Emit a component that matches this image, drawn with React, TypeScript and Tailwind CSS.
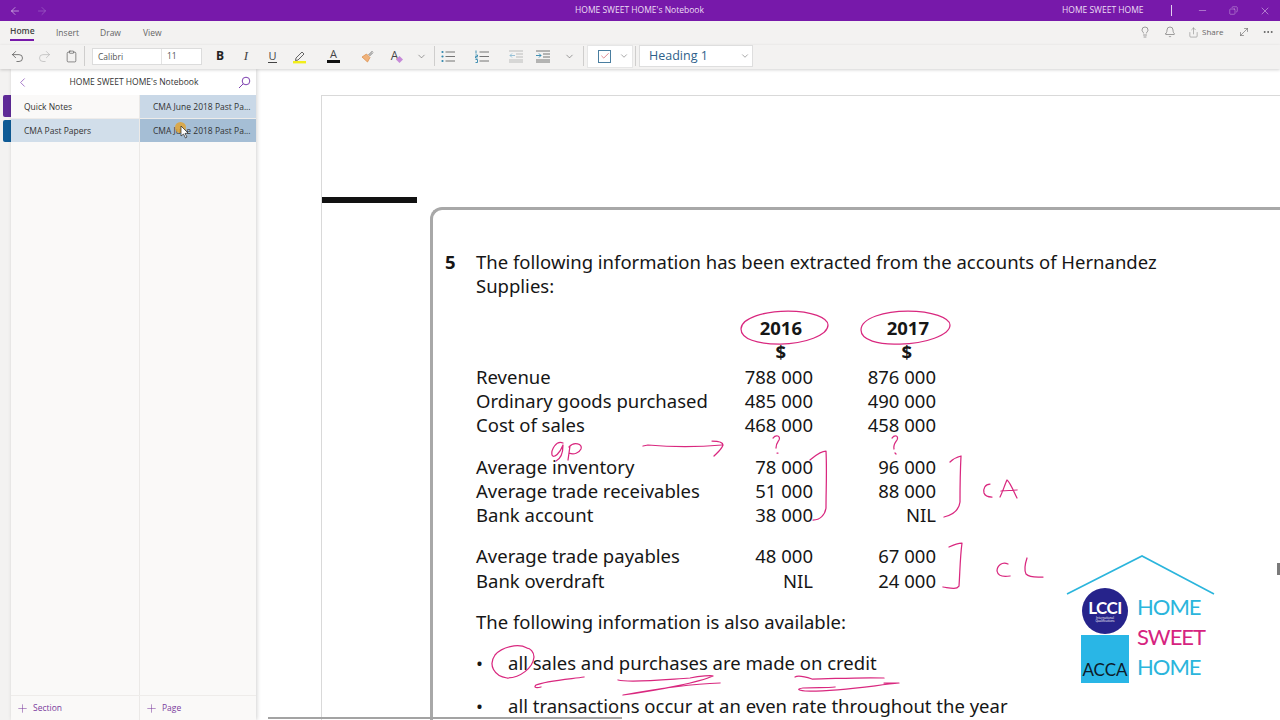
import React from 'react';
import {
  ArrowLeft, ArrowRight, Minus, X, Undo2, Redo2, Clipboard, ChevronDown, ChevronLeft,
  Lightbulb, Bell, Share, MoveDiagonal, Ellipsis, Plus, Check, Copy,
} from 'lucide-react';

const uiFont = "font-['Open_Sans','Noto_Sans',sans-serif]";

function Cell({ w, ml = '', children }: { w: string; ml?: string; children: React.ReactNode }) {
  return <div className={`flex h-full items-center justify-center ${w} ${ml}`}>{children}</div>;
}

function Sep({ ml }: { ml: string }) {
  return <div className={`h-[20px] w-px bg-[#cfcecd] ${ml}`} />;
}

// list style icons from the ribbon, dots/arrows in blue and lines in grey
function ListGlyph({ kind }: { kind: 'bullet' | 'number' | 'outdent' | 'indent' }) {
  const line = kind === 'outdent' ? '#b5b5b5' : '#666';
  return (
    <svg width="14" height="13" viewBox="0 0 14 13" fill="none" strokeWidth="0.9">
      {kind === 'bullet' && (
        <g fill="#2f86ad" stroke="none">
          <circle cx="1.5" cy="2" r="1.1" /><circle cx="1.5" cy="6.5" r="1.1" /><circle cx="1.5" cy="11" r="1.1" />
        </g>
      )}
      {kind === 'number' && (
        <g stroke="#2f86ad">
          <path d="M1 0.5 V3.5 M0.5 5 H2.5 V6.5 H0.5 V8 H2.5 M0.5 9.5 H2.5 V12.5 H0.5" />
        </g>
      )}
      {(kind === 'bullet' || kind === 'number') && (
        <path d="M4.5 2 H14 M4.5 6.5 H14 M4.5 11 H14" stroke={line} />
      )}
      {kind === 'outdent' && (
        <>
          <path d="M0 1 H14 M7 4 H14 M7 7 H14 M0 10 H14 M0 12 H14" stroke={line} />
          <path d="M6 5.5 H1 M3 3.5 L1 5.5 L3 7.5" stroke="#8fbcd4" />
        </>
      )}
      {kind === 'indent' && (
        <>
          <path d="M0 1 H14 M7 4 H14 M7 7 H14 M0 10 H14 M0 12 H14" stroke={line} />
          <path d="M0 5.5 H5 M3 3.5 L5 5.5 L3 7.5" stroke="#2f86ad" />
        </>
      )}
    </svg>
  );
}

const rows: [string, string, string][] = [
  ['Revenue', '788 000', '876 000'],
  ['Ordinary goods purchased', '485 000', '490 000'],
  ['Cost of sales', '468 000', '458 000'],
];
const assets: [string, string, string][] = [
  ['Average inventory', '78 000', '96 000'],
  ['Average trade receivables', '51 000', '88 000'],
  ['Bank account', '38 000', 'NIL'],
];
const liabilities: [string, string, string][] = [
  ['Average trade payables', '48 000', '67 000'],
  ['Bank overdraft', 'NIL', '24 000'],
];

function FigureRows({ data, className = '' }: { data: [string, string, string][]; className?: string }) {
  return (
    <div className={className}>
      {data.map(r => (
        <div key={r[0]} className="grid h-[24.3px] grid-cols-[337px_123px] items-center">
          <div className="flex justify-between">
            <span>{r[0]}</span>
            <span>{r[1]}</span>
          </div>
          <div className="text-right">{r[2]}</div>
        </div>
      ))}
    </div>
  );
}

function Logo() {
  return (
    <div className="absolute left-[1066px] top-[555px] h-[130px] w-[150px]">
      <svg width="150" height="40" viewBox="0 0 150 40" className="block">
        <path d="M1 39 L76 1 L148 39" fill="none" stroke="#2bb5dc" strokeWidth="1.6" />
      </svg>
      <div className="ml-[15px] mt-[-7px] flex gap-[8px]">
        <div className="flex w-[48px] flex-col items-center">
          <div className="flex h-[46px] w-[46px] flex-col items-center justify-center rounded-full bg-[#26238b] text-white">
            <span className="text-[17px] font-bold leading-[15px] tracking-[-0.5px] font-['Lato',sans-serif]">LCCI</span>
            <span className="mt-[2px] text-[3px] leading-[3px]">International</span>
            <span className="text-[3px] leading-[3px]">Qualifications</span>
          </div>
          <div className="mt-[1px] flex h-[48px] w-[48px] items-end justify-center bg-[#29b6e6] pb-[4px] text-[17px] leading-[18px] text-[#0d1b2a] font-['Lato',sans-serif]">ACCA</div>
        </div>
        <div className="flex flex-col pt-[4px] text-[22px] leading-[30px] tracking-[-1px] font-['Lato',sans-serif] text-[#2bb5dc]">
          <span>HOME</span>
          <span className="text-[#d6237f]">SWEET</span>
          <span>HOME</span>
        </div>
      </div>
    </div>
  );
}

function Ink() {
  return (
    <svg width="1280" height="720" viewBox="0 0 1280 720" fill="none" stroke="#d9287f" strokeWidth="1.25" strokeLinecap="round" strokeLinejoin="round" className="pointer-events-none absolute left-0 top-0">
      <path d="M741 329 C741 318 765 311 788 311 C812 311 828 318 828 325 C828 335 805 344 780 344 C757 344 741 339 741 329 Z" />
      <path d="M861 330 C861 318 885 311 908 311 C932 311 950 318 950 325 C950 335 925 344 900 344 C878 345 861 340 861 330 Z" />
      <path d="M563 443 C556 440 551 450 552 455 C554 459 560 453 563 445 C563 452 562 458 556 461 M570 446 L568 460 M569 447 C574 441 583 444 581 449 C579 453 574 455 569 453" />
      <path d="M643 446 L648 445 C670 447 700 447 722 445 M712 441 C717 441 723 442 723 445 C722 449 717 453 714 456" />
      <path d="M773 438 C776 434 781 436 779 440 C777 443 776 444 776 448 M777 453 L778 453" />
      <path d="M892 438 C895 434 899 436 897 440 C895 443 893 445 894 449 M895 453 L896 454" />
      <path d="M810 460 C815 456 820 451 826 451 C827 470 826 490 826 508 C825 515 820 520 813 520" />
      <path d="M950 462 C953 459 957 457 961 456 C960 475 960 490 960 502 C959 511 952 515 944 517" />
      <path d="M990 484 C985 484 983 489 984 493 C985 496 988 497 992 497" />
      <path d="M1000 497 C1003 491 1005 484 1007 480 C1010 482 1014 492 1017 498 M1001 491 L1017 490" />
      <path d="M949 547 C953 545 958 543 962 543 C960 558 960 572 959 586 C956 590 950 588 943 587" />
      <path d="M1008 564 C1002 561 997 566 997 571 C998 576 1004 577 1010 576" />
      <path d="M1027 558 C1025 564 1024 570 1026 574 C1030 578 1037 577 1043 577" />
      <path d="M527 648 C518 643 502 647 495 655 C488 665 494 676 507 678 C520 678 533 668 534 657 C534 652 530 648 527 648" />
      <path d="M584 677 C570 679 545 681 536 685 C533 688 537 688 541 687" />
      <path d="M618 680 C630 683 660 680 690 678 C700 676 712 675 713 676 C700 682 660 690 623 695 C650 690 690 684 720 683" />
      <path d="M795 677 C798 675 806 677 812 679 C830 679 860 677 884 678" />
      <path d="M884 683 L899 683 C870 686 835 692 805 691 C797 690 797 689 803 688 C815 687 825 688 835 687" />
    </svg>
  );
}

export default function App() {
  return (
    <div className={`relative flex h-[720px] w-[1280px] flex-col overflow-hidden bg-white text-[#262626] ${uiFont}`}>
      {/* title bar */}
      <div className="relative flex h-[21px] shrink-0 items-center whitespace-nowrap bg-[#7719aa] text-[8.5px] text-[#ecdff4]">
        <ArrowLeft size={12} strokeWidth={1.2} className="ml-[9px]" />
        <ArrowRight size={12} strokeWidth={1.2} className="ml-[15px] text-[#a66fcb]" />
        <span className="ml-[527px] w-[128px]">HOME SWEET HOME's Notebook</span>
        <span className="ml-[359px] w-[81px]">HOME SWEET HOME</span>
        <div className="ml-[28px] h-[11px] w-px bg-[#e3cff0]" />
        <Minus size={11} strokeWidth={1} className="ml-[25px]" />
        <Copy size={9} strokeWidth={1} className="ml-[21px] -scale-x-100" />
        <X size={12} strokeWidth={1} className="ml-[21px]" />
      </div>

      {/* tabs */}
      <div className="flex h-[24px] shrink-0 items-start bg-[#f3f2f1] text-[8.5px] text-[#666]">
        <div className="ml-[10px] flex h-[20px] w-[24px] flex-col justify-end border-b-[2px] border-[#7719aa] pb-[2px] font-semibold leading-[12px] text-[#444]">Home</div>
        <span className="ml-[22px] w-[21px] pt-[6px] leading-[12px]">Insert</span>
        <span className="ml-[23px] w-[20px] pt-[6px] leading-[12px]">Draw</span>
        <span className="ml-[23px] pt-[6px] leading-[12px]">View</span>
        <div className="ml-auto mr-[6px] flex h-[22px] items-center text-[#555]">
          <Lightbulb size={12} strokeWidth={1.1} />
          <Bell size={12} strokeWidth={1.1} className="ml-[13px]" />
          <Share size={11} strokeWidth={1.1} className="ml-[12px] text-[#777]" />
          <span className="ml-[3px] w-[22px] text-[8px] text-[#666]">Share</span>
          <MoveDiagonal size={12} strokeWidth={1.1} className="ml-[14px]" />
          <Ellipsis size={12} strokeWidth={1.8} className="ml-[12px]" />
        </div>
      </div>

      {/* toolbar */}
      <div className="relative z-10 flex h-[24px] shrink-0 items-center bg-[#f3f2f1] pb-[2px] text-[#444] shadow-[0_1px_3px_rgba(0,0,0,0.18)]">
        <Cell w="w-[27px]" ml="ml-[4px]"><Undo2 size={15} strokeWidth={1.1} /></Cell>
        <Cell w="w-[27px]"><Redo2 size={15} strokeWidth={1.1} className="text-[#b5b5b5]" /></Cell>
        <Cell w="w-[26px]"><Clipboard size={13} strokeWidth={1.1} /></Cell>
        <Sep ml="ml-[0px]" />
        <div className="ml-[7px] flex h-[17px] w-[110px] items-center border border-[#dcdcdc] bg-white text-[8.5px] text-[#555]">
          <span className="w-[69px] border-r border-[#e3e3e3] pl-[5px] leading-[15px]">Calibri</span>
          <span className="pl-[5px]">11</span>
        </div>
        <Cell w="w-[26px]" ml="ml-[5px]"><span className="text-[12px] font-bold text-[#222]">B</span></Cell>
        <Cell w="w-[26px]"><span className="font-['Liberation_Serif',serif] text-[13px] italic">I</span></Cell>
        <Cell w="w-[27px]"><span className="border-b border-[#444] text-[11px] leading-[12px]">U</span></Cell>
        <Cell w="w-[27px]">
          <svg width="15" height="15" viewBox="0 0 15 15" fill="none">
            <path d="M4 9 L10 3 L12 5 L6 11 L3.5 11.5 Z" stroke="#555" strokeWidth="0.9" />
            <rect x="1" y="12" width="13" height="2.4" fill="#f2ee1a" />
          </svg>
        </Cell>
        <Cell w="w-[41px]">
          <div className="flex flex-col items-center">
            <span className="text-[11px] leading-[10px]">A</span>
            <div className="mt-[1px] h-[3px] w-[13px] bg-[#111]" />
          </div>
        </Cell>
        <Cell w="w-[27px]">
          <svg width="13" height="13" viewBox="0 0 13 13" fill="none">
            <path d="M7.5 5 L11.5 1 M8.5 6 L12 2.5" stroke="#777" strokeWidth="1" />
            <path d="M5.5 4 L9 7.5 L6.5 12 L1 7 Z" fill="#f0b27a" stroke="#d98a45" strokeWidth="0.7" />
          </svg>
        </Cell>
        <Cell w="w-[27px]">
          <div className="relative text-[12px] leading-[12px]">A<span className="absolute -right-[4px] bottom-0 h-[5px] w-[5px] rotate-45 bg-[#c68ad8]" /></div>
        </Cell>
        <Cell w="w-[26px]"><ChevronDown size={11} strokeWidth={1.1} /></Cell>
        <Sep ml="ml-[0px]" />
        <Cell w="w-[26px]"><ListGlyph kind="bullet" /></Cell>
        <Cell w="w-[41px]"><ListGlyph kind="number" /></Cell>
        <Cell w="w-[27px]"><ListGlyph kind="outdent" /></Cell>
        <Cell w="w-[27px]"><ListGlyph kind="indent" /></Cell>
        <Cell w="w-[27px]"><ChevronDown size={11} strokeWidth={1.1} /></Cell>
        <Sep ml="ml-[0px]" />
        <div className="ml-[3px] flex h-[23px] w-[46px] items-center border border-[#e6e6e6] bg-white">
          <div className="ml-[10px] flex h-[13px] w-[13px] items-center justify-center border border-[#4a7ea0]">
            <Check size={10} strokeWidth={1.4} className="text-[#c8343f]" />
          </div>
          <ChevronDown size={10} strokeWidth={1.1} className="ml-[8px]" />
        </div>
        <Sep ml="ml-[2px]" />
        <div className="ml-[3px] flex h-[22px] w-[114px] items-center justify-between border border-[#dedede] bg-white pl-[9px] pr-[2px] text-[12.5px] text-[#2e5f8a]">
          <span>Heading 1</span>
          <ChevronDown size={10} strokeWidth={1.1} className="text-[#444]" />
        </div>
      </div>

      <div className="flex min-h-0 flex-1">
        {/* section strip */}
        <div className="flex w-[11px] shrink-0 flex-col bg-[#f3f2f1] pl-[3px] pt-[26px]">
          <div className="h-[22px] rounded-l-[2px] bg-[#5e2a97]" />
          <div className="mt-[3px] h-[22px] rounded-l-[2px] bg-[#0f5b96]" />
        </div>

        {/* navigation */}
        <div className="z-[5] flex w-[245px] shrink-0 flex-col bg-[#faf9f8] text-[8.5px] text-[#333] shadow-[1px_0_4px_rgba(0,0,0,0.18)]">
          <div className="flex h-[26px] items-center justify-between bg-white pl-[4px] pr-[5px] pt-[1px]">
            <ChevronLeft size={15} strokeWidth={1.1} className="text-[#7d3fb0]" />
            <span className="text-[8.5px]">HOME SWEET HOME's Notebook</span>
            <svg width="13" height="13" viewBox="0 0 13 13" fill="none" stroke="#7d3fb0" strokeWidth="1">
              <circle cx="8" cy="5" r="3.8" />
              <path d="M5.2 7.8 L1 12" />
            </svg>
          </div>
          <div className="flex min-h-0 flex-1">
            <div className="flex w-[129px] flex-col border-r border-[#ebe9e7]">
              <div className="flex h-[24px] items-center border-b border-[#eeecea] pl-[13px] pt-[1px]">Quick Notes</div>
              <div className="flex h-[23px] items-center bg-[#d1deea] pl-[13px] pt-[1px]">CMA Past Papers</div>
            </div>
            <div className="flex flex-1 flex-col">
              <div className="flex h-[24px] items-center border-b border-[#eeecea] bg-[#c9d8e7] pl-[13px] pt-[1px]">CMA June 2018 Past Pa...</div>
              <div className="flex h-[23px] items-center bg-[#a5bed5] pl-[13px] pt-[1px]">CMA June 2018 Past Pa...</div>
            </div>
          </div>
          <div className="flex h-[25px] border-t border-[#eeecea] text-[8.5px] text-[#7a3c9e]">
            <div className="flex w-[129px] items-center gap-[4px] border-r border-[#ebe9e7] pl-[5px]"><Plus size={13} strokeWidth={1} />Section</div>
            <div className="flex items-center gap-[4px] pl-[5px]"><Plus size={13} strokeWidth={1} />Page</div>
          </div>
        </div>

        {/* page canvas */}
        <div className="relative min-w-0 flex-1 overflow-hidden bg-white pl-[65px] pt-[26px]">
          <div className="h-[700px] border-l border-t border-[#d9d9d9]">
            <div className="mt-[101px] h-[6px] w-[95px] bg-[#111]" />
            <div className="ml-[108px] mt-[4px] h-[600px] rounded-tl-[12px] border-l-[3px] border-t-[3px] border-[#a8a8a8] pl-[12px] pt-[40px] text-[18.5px] leading-[24.3px] text-[#161616] font-['Noto_Sans',sans-serif]">
              <div className="flex">
                <span className="w-[31px] font-bold">5</span>
                <p className="w-[700px]">The following information has been extracted from the accounts of Hernandez Supplies:</p>
              </div>
              <div className="ml-[31px] mt-[17px]">
                <div className="grid grid-cols-[337px_123px] font-bold">
                  <span className="pr-[11px] text-right">2016</span>
                  <span className="pr-[7px] text-right">2017</span>
                  <span className="pr-[27px] text-right">$</span>
                  <span className="pr-[24px] text-right">$</span>
                </div>
                <FigureRows data={rows} className="mt-[0.5px]" />
                <FigureRows data={assets} className="mt-[17px]" />
                <FigureRows data={liabilities} className="mt-[17px]" />
                <p className="mt-[16.5px]">The following information is also available:</p>
                <div className="mt-[17.5px] flex"><span className="w-[32px]">•</span><span>all sales and purchases are made on credit</span></div>
                <div className="mt-[18px] flex"><span className="w-[32px]">•</span><span>all transactions occur at an even rate throughout the year</span></div>
              </div>
            </div>
          </div>
          <div className="absolute bottom-[1px] left-[12px] h-[2px] w-[354px] bg-[#a3a3a3]" />
        </div>
      </div>

      <div className="absolute left-[1277px] top-[563px] h-[12px] w-[3px] bg-[#7a7a7a]" />
      <Logo />
      <Ink />

      {/* mouse pointer */}
      <div className="absolute left-[175px] top-[122px] z-20 h-[11px] w-[11px] rounded-full bg-[#e5a32b] opacity-80" />
      <svg width="10" height="14" viewBox="0 0 10 14" className="absolute left-[180px] top-[125px] z-20">
        <path d="M1 1 L1 11 L3.5 9 L5.5 13 L7 12 L5 8.5 L8 8 Z" fill="#fff" stroke="#222" strokeWidth="0.7" />
      </svg>
    </div>
  );
}
